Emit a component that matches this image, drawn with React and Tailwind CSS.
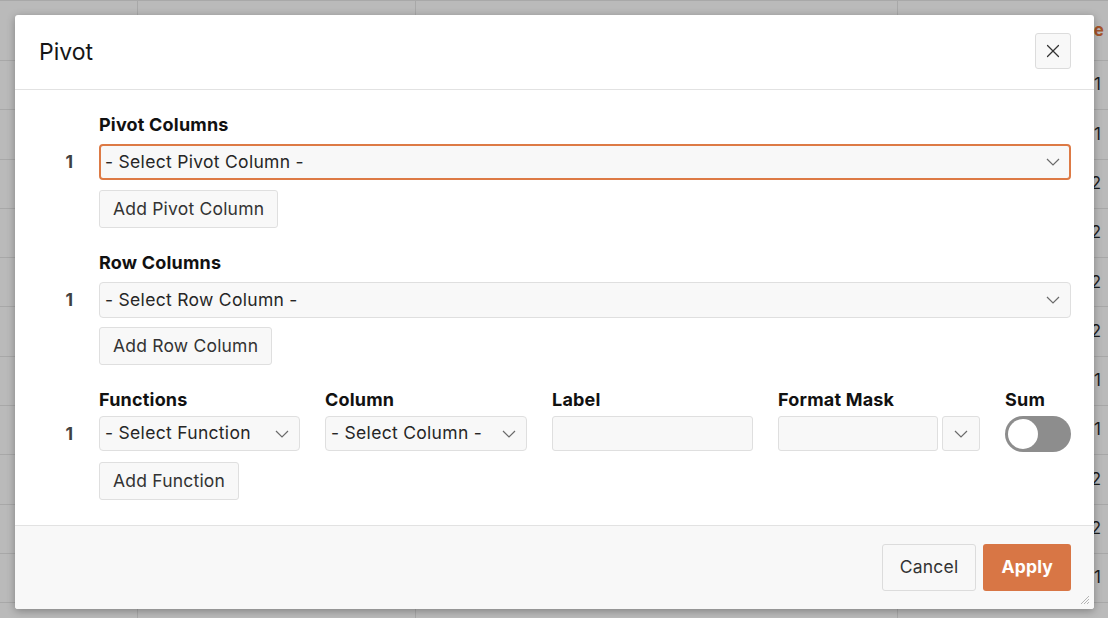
import { X } from 'lucide-react';

const font = { fontFamily: 'Inter, "Noto Sans", sans-serif' };
const rowVals = ['1', '1', '2', '2', '2', '2', '1', '1', '2', '2', '1', ''];

function Chevron({ className = '' }) {
  return (
    <svg width="14" height="8" viewBox="0 0 14 8" className={className}>
      <path d="M1 1 L7 7 L13 1" fill="none" stroke="#6b6b6b" strokeWidth="1.2" />
    </svg>
  );
}

function Select({ text, orange, className = '' }) {
  return (
    <div
      className={`flex items-center justify-between bg-[#f8f8f8] rounded-[4px] ${
        orange ? 'border-2 border-[#dd7a45] pl-[4px] pr-[9px]' : 'border border-[#dfdfdf] pl-[5px] pr-[10px]'
      } ${className}`}
    >
      <span className="text-[17.5px] tracking-[0.3px] text-[#262626] whitespace-nowrap">{text}</span>
      <Chevron />
    </div>
  );
}

function Btn({ children, className = '' }) {
  return (
    <div className={`inline-flex items-center bg-[#f8f8f8] border border-[#dfdfdf] rounded-[3px] px-[13px] text-[17.5px] tracking-[0.2px] text-[#333] ${className}`}>
      {children}
    </div>
  );
}

function Num() {
  return <div className="w-[84px] pr-[26px] text-right text-[17.5px] font-bold text-[#404040]">1</div>;
}

function Label({ children, className = '' }) {
  return <div className={`text-[18px] font-bold tracking-[0.2px] text-[#111] leading-[20px] ${className}`}>{children}</div>;
}

function Background() {
  return (
    <div className="flex flex-col">
      <div className="grid grid-cols-[138px_278px_482px_1fr] h-[61px] border-t border-b border-[#a8a8a8]">
        <div className="border-r border-[#a8a8a8]" />
        <div className="border-r border-[#a8a8a8]" />
        <div className="border-r border-[#a8a8a8]" />
        <div className="flex items-center justify-end pr-[4px] text-[17px] font-bold text-[#a65329]">e</div>
      </div>
      {rowVals.map((v, i) => (
        <div key={i} className="grid grid-cols-[138px_278px_482px_1fr] h-[49.3px] border-b border-[#a8a8a8]">
          <div className="border-r border-[#a8a8a8]" />
          <div className="border-r border-[#a8a8a8]" />
          <div className="border-r border-[#a8a8a8]" />
          <div className="flex items-center justify-end pr-[7px] text-[17px] text-[#1c1c1c]">{v}</div>
        </div>
      ))}
    </div>
  );
}

export default function App() {
  return (
    <div className="relative w-[1108px] h-[618px] overflow-hidden bg-[#bababa]" style={font}>
      <Background />

      <div className="absolute left-[15px] top-[15px] w-[1079px] h-[594px] bg-white rounded-[3px] shadow-[0_2px_8px_rgba(0,0,0,0.3)] flex flex-col overflow-hidden">
        {/* header */}
        <div className="h-[75px] shrink-0 border-b border-[#e2e2e2] flex items-center justify-between pl-[24px] pr-[23px]">
          <h1 className="text-[23px] text-[#161616]">Pivot</h1>
          <button className="w-[36px] h-[36px] flex items-center justify-center bg-[#f8f8f8] border border-[#dcdcdc] rounded-[3px] -mt-[3px]">
            <X size={22} strokeWidth={1.3} color="#333" />
          </button>
        </div>

        {/* body */}
        <div className="flex-1 pt-[25px] pr-[23px]">
          {/* pivot columns */}
          <div className="pl-[84px]">
            <Label>Pivot Columns</Label>
          </div>
          <div className="flex items-center mt-[9px]">
            <Num />
            <Select text="- Select Pivot Column -" orange className="flex-1 h-[36px]" />
          </div>
          <div className="pl-[84px] mt-[10px]">
            <Btn className="h-[38px]">Add Pivot Column</Btn>
          </div>

          {/* row columns */}
          <div className="pl-[84px] mt-[25px]">
            <Label>Row Columns</Label>
          </div>
          <div className="flex items-center mt-[9px]">
            <Num />
            <Select text="- Select Row Column -" className="flex-1 h-[36px]" />
          </div>
          <div className="pl-[84px] mt-[9px]">
            <Btn className="h-[38px]">Add Row Column</Btn>
          </div>

          {/* functions */}
          <div className="flex pl-[84px] mt-[25px] gap-[25px]">
            <Label className="w-[201px]">Functions</Label>
            <Label className="w-[202px]">Column</Label>
            <Label className="w-[201px]">Label</Label>
            <Label className="w-[202px]">Format Mask</Label>
            <Label>Sum</Label>
          </div>
          <div className="flex items-center mt-[6px]">
            <Num />
            <div className="flex gap-[25px]">
              <Select text="- Select Function" className="w-[201px] h-[35px]" />
              <Select text="- Select Column -" className="w-[202px] h-[35px]" />
              <div className="w-[201px] h-[35px] bg-[#f8f8f8] border border-[#dfdfdf] rounded-[3px]" />
              <div className="w-[202px] h-[35px] flex gap-[4px]">
                <div className="flex-1 bg-[#f8f8f8] border border-[#dfdfdf] rounded-[3px]" />
                <div className="w-[38px] bg-[#f8f8f8] border border-[#dfdfdf] rounded-[3px] flex items-center justify-center">
                  <Chevron />
                </div>
              </div>
              <div className="w-[66px] h-[36px] rounded-full bg-[#8d8d8d] p-[3px] flex items-center">
                <div className="w-[30px] h-[30px] rounded-full bg-white" />
              </div>
            </div>
          </div>
          <div className="pl-[84px] mt-[10px]">
            <Btn className="h-[38px]">Add Function</Btn>
          </div>
        </div>

        {/* footer */}
        <div className="h-[84px] shrink-0 border-t border-[#e2e2e2] bg-[#f8f8f8] relative flex items-start justify-end gap-[7px] pt-[18px] pr-[23px]">
          <button className="h-[47px] px-[17px] bg-[#f8f8f8] border border-[#dcdcdc] rounded-[3px] text-[17.5px] tracking-[0.2px] text-[#333]">Cancel</button>
          <button className="h-[47px] px-[18px] bg-[#d87645] rounded-[3px] text-[17.5px] tracking-[0.2px] font-bold text-white">Apply</button>
          <svg width="10" height="10" viewBox="0 0 10 10" className="absolute right-[4px] bottom-[4px]">
            <path d="M9 1 L1 9 M9 4 L4 9 M9 7 L7 9" stroke="#b5b5b5" strokeWidth="1" />
          </svg>
        </div>
      </div>
    </div>
  );
}
